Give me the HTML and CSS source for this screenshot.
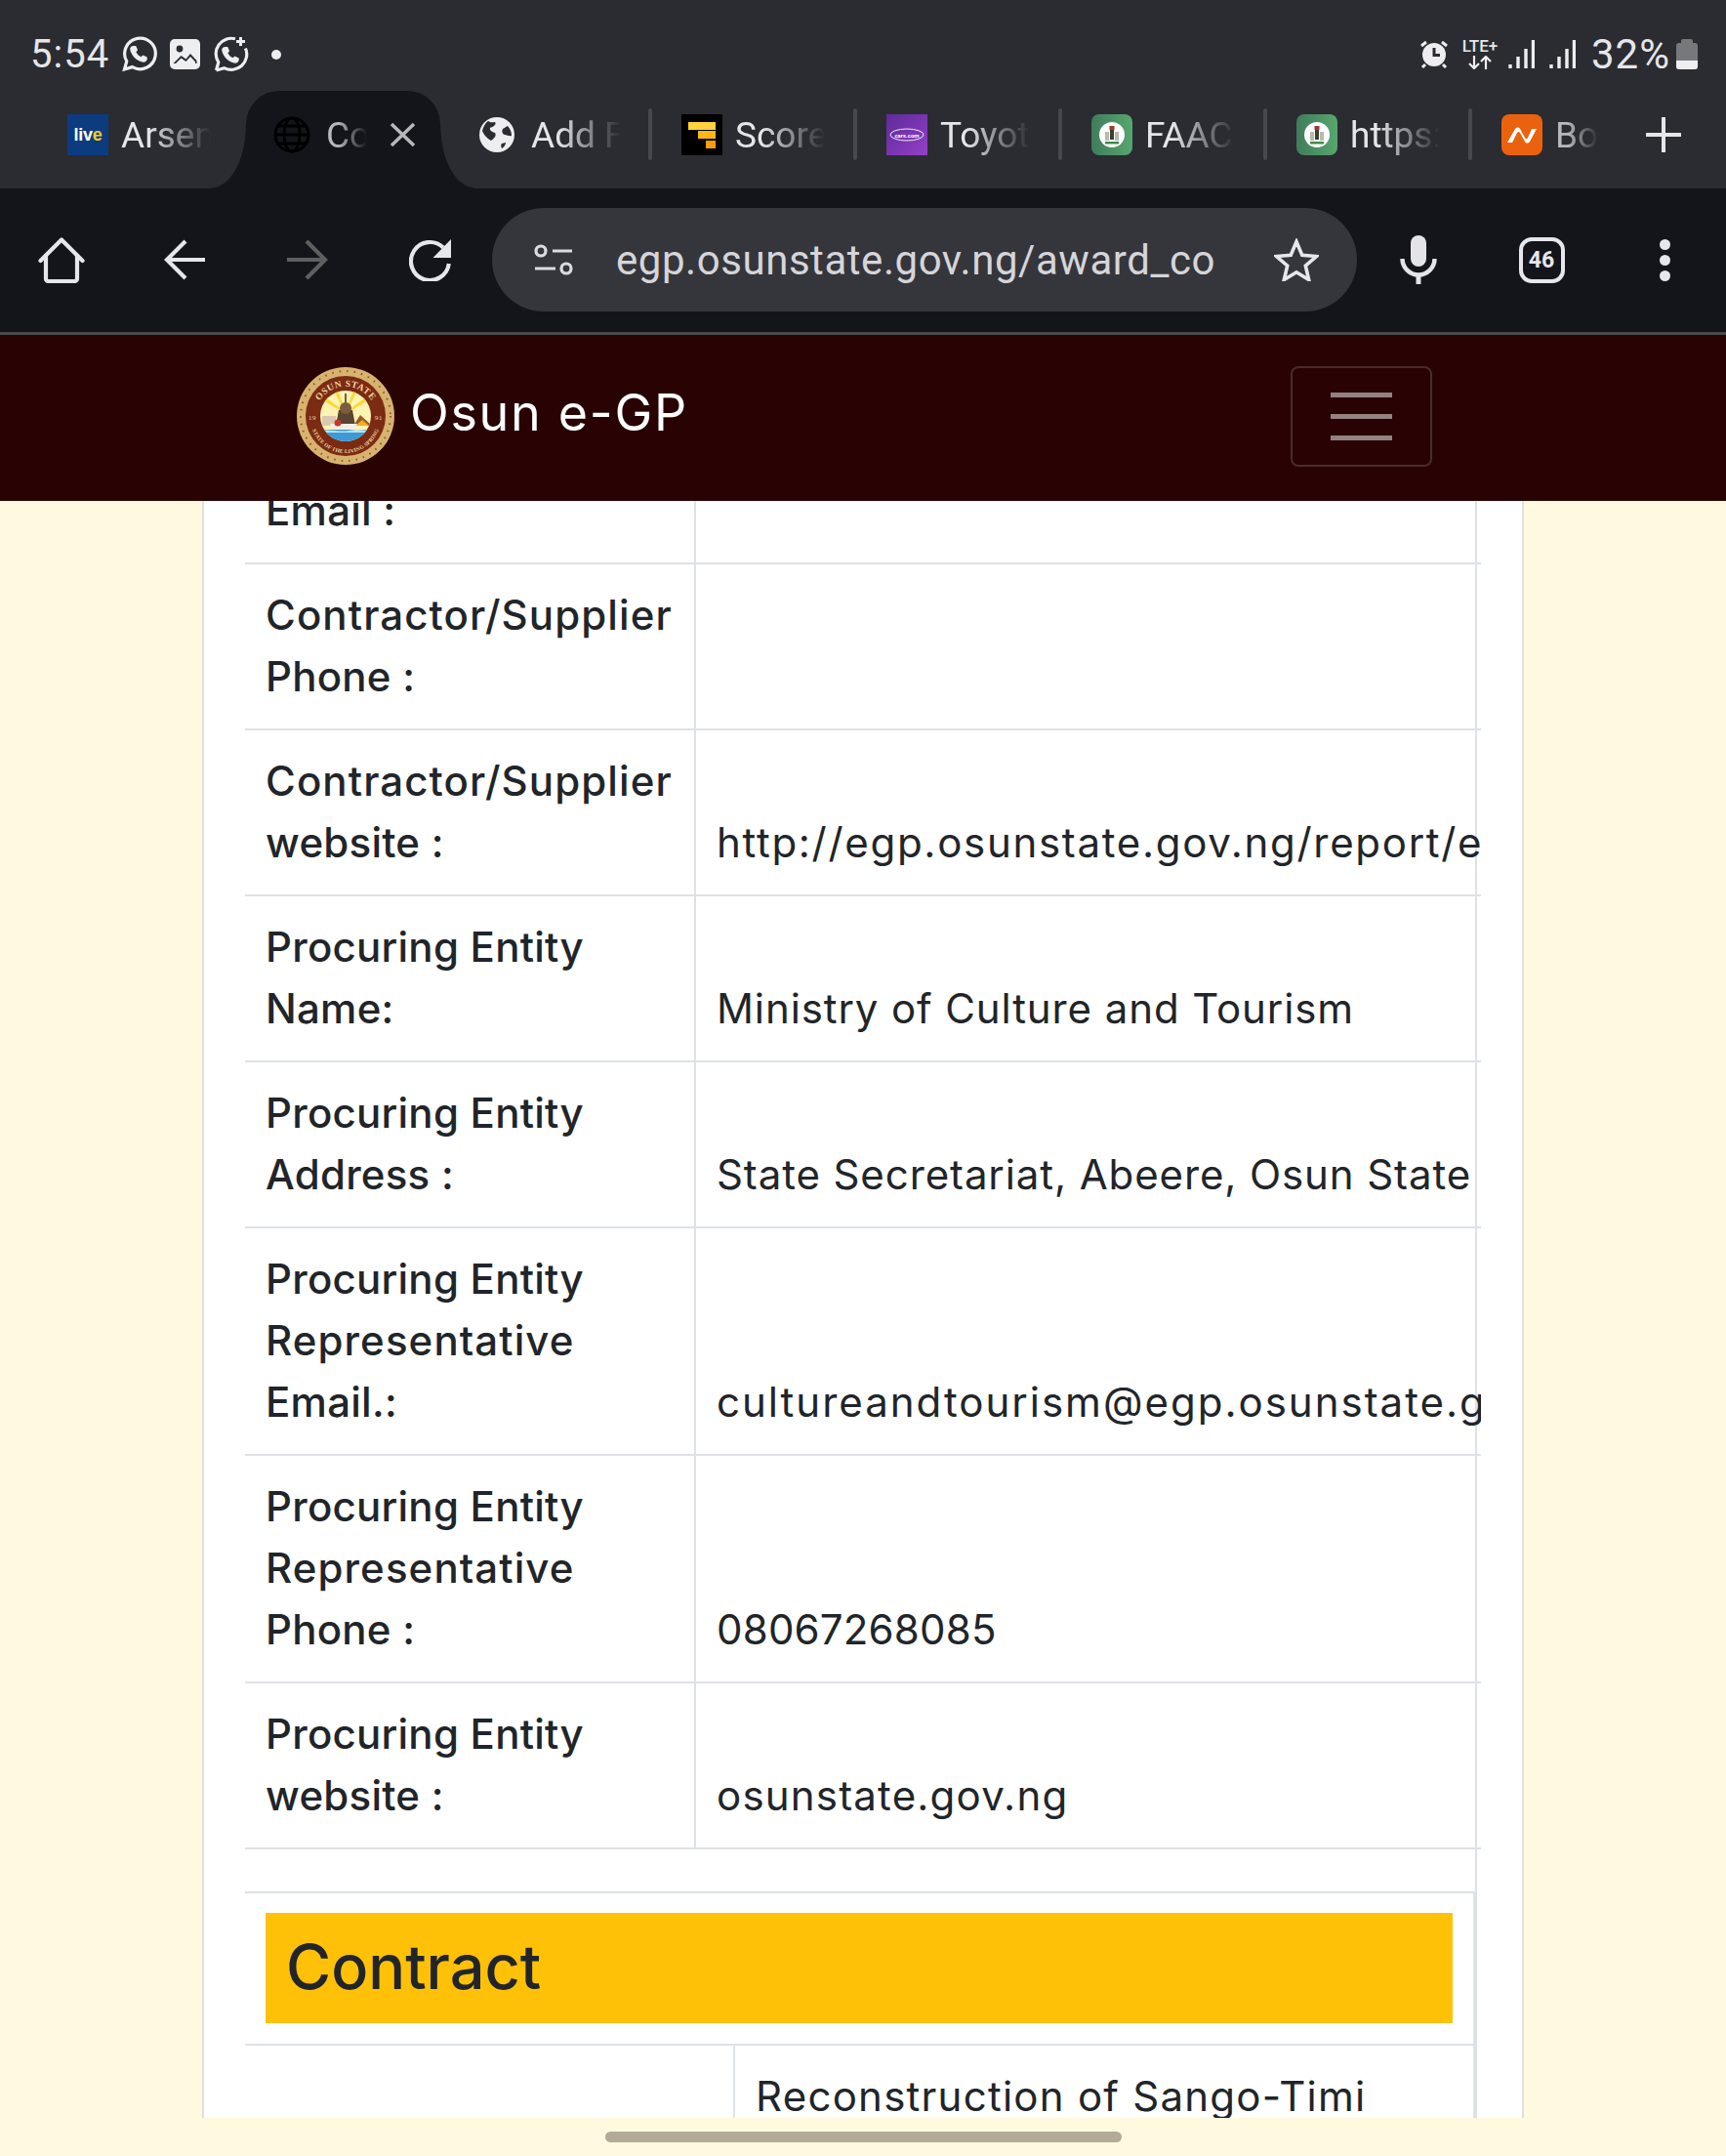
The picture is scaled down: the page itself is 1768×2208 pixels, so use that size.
FILE: index.html
```html
<!DOCTYPE html>
<html lang="en">
<head>
<meta charset="utf-8">
<title>Osun e-GP</title>
<link rel="stylesheet" href="styles.css">
</head>
<body>
<header class="chrome">
  <div class="status">
    <span class="clock">5:54</span>
    <svg class="ic-wa" viewBox="0 0 37 37"><path class="wa-line" d="M3.5 34l2.3-8.2A15.8 15.8 0 1 1 11.6 31.6z"/><path class="wa-fill" d="M13 10l2.2 0 1.9 4.2-1.7 2.1c1.1 2.2 2.8 3.9 5 5l2.1-1.7 4.2 1.9 0 2.2c-.6 2.3-2.8 3.4-5 2.8-6.2-1.6-10.9-6.3-12.4-12.5-.5-2.2.8-4 3.7-4z"/></svg>
    <svg class="ic-img" viewBox="0 0 31 31"><rect class="wa-fill" width="31" height="31" rx="5"/><circle class="dark" cx="10" cy="10" r="3.4"/><path class="dark" d="M3.5 25l8-8 5 3.5 4.5-5.5 6.5 7v3h-24z"/><path class="wa-fill" d="M6 25l5.5-5.500 5 3.500 4.500-5 5 5.300v1.700z"/></svg>
    <svg class="ic-wa2" viewBox="0 0 37 37"><path class="wa-line" d="M3.500 35L5.800 26.800A15.800 15.800 0 0 1 23 2.800M33.500 12.500A15.800 15.800 0 0 1 11.600 32.600L3.500 35"/><path class="wa-fill" d="M13 11l2.200 0 1.900 4.200-1.700 2.100c1.100 2.200 2.800 3.900 5 5l2.100-1.700 4.200 1.900 0 2.200c-.6 2.300-2.800 3.400-5 2.800-6.200-1.600-10.900-6.300-12.400-12.500-.5-2.200.8-4 3.700-4z"/><path class="wa-plus" d="M28.500 1v9M24 5.500h9"/></svg>
    <span class="dot"></span>
    <span class="status-spacer"></span>
    <svg class="ic-alarm" viewBox="0 0 30 29"><circle class="wa-fill" cx="15" cy="15" r="12"/><path class="dark-line" d="M15 8v7.500h6"/><path class="wa-plus" d="M2 6l5-4M28 6l-5-4M6 25l-3 3M24 25l3 3"/></svg>
    <span class="lte"><span class="lte-text">LTE+</span><svg class="lte-arrows" viewBox="0 0 24 14"><path class="thin" d="M6 0v13M1 8l5 5 5-5M18 14V1M13 6l5-5 5 5"/></svg></span>
    <svg class="ic-sig" viewBox="0 0 27 29"><path class="sig" d="M2 25v4M10 17v12M18 9v20M25.500 0v29"/></svg>
    <svg class="ic-sig ic-sig2" viewBox="0 0 27 29"><path class="sig" d="M2 25v4M10 17v12M18 9v20M25.500 0v29"/></svg>
    <span class="pct">32%</span>
    <span class="battery"><span class="bat-cap"></span><span class="bat-body"><span class="bat-level"></span></span></span>
  </div>

  <nav class="tabs">
    <div class="tab tab-first">
      <span class="fav fav-live"><span>liv<b>e</b></span></span>
      <span class="label">Arsen</span>
    </div>
    <div class="tab tab-active">
      <svg class="ic-globe" viewBox="0 0 38 38"><g class="globe-line"><circle cx="19" cy="19" r="17"/><ellipse cx="19" cy="19" rx="8" ry="17"/><path d="M2 19h34"/><path d="M4 10h30M4 28h30"/></g></svg>
      <span class="label label-active">Co</span>
      <svg class="ic-close" viewBox="0 0 27 26"><path d="M2 2l23 22M25 2L2 24"/></svg>
    </div>
    <div class="tab tab-sep tab-third">
      <svg class="ic-world" viewBox="0 0 36 36"><circle class="wa-fill" cx="18" cy="18" r="18"/><path class="dark" d="M9 4c3 2 4 1 7 1 2 3-2 5-5 6-1 3 3 4 5 5 2 3-1 6-4 8C8 22 4 17 3 14 4 10 6 6 9 4zM29 9c3 3 4 7 4 10-2 1-5-1-7-1-3-1-3-4-2-6 2-1 3-2 5-3zM23 27l4-1c0 2-2 5-4 6-1-2-1-4 0-5z"/></svg>
      <span class="label">Add F</span>
      <span class="sep"></span>
    </div>
    <div class="tab tab-sep">
      <span class="fav fav-score"><i class="s1"></i><i class="s2"></i><i class="s3"></i></span>
      <span class="label">Score</span>
      <span class="sep"></span>
    </div>
    <div class="tab tab-sep">
      <span class="fav fav-cars"><svg viewBox="0 0 42 42"><ellipse class="cars-ring" cx="21" cy="21" rx="17" ry="6"/><text class="cars-text" x="21" y="23.500" text-anchor="middle">cars.com</text></svg></span>
      <span class="label">Toyot</span>
      <span class="sep"></span>
    </div>
    <div class="tab tab-sep">
      <span class="fav fav-ng"><svg viewBox="0 0 42 42"><circle cx="21" cy="21" r="13" fill="#fff"/><path d="M18.500 12h5v4h-5z" fill="#a8352b"/><path d="M19 16h4v10h-4z" fill="#37402f"/><path d="M14 18h4v9h-4zM24 18h4v9h-4z" fill="#b9b9ae"/><path d="M14 28h14v2.500H14z" fill="#3f8a4a"/></svg></span>
      <span class="label">FAAC</span>
      <span class="sep"></span>
    </div>
    <div class="tab tab-sep">
      <span class="fav fav-ng"><svg viewBox="0 0 42 42"><circle cx="21" cy="21" r="13" fill="#fff"/><path d="M18.500 12h5v4h-5z" fill="#a8352b"/><path d="M19 16h4v10h-4z" fill="#37402f"/><path d="M14 18h4v9h-4zM24 18h4v9h-4z" fill="#b9b9ae"/><path d="M14 28h14v2.500H14z" fill="#3f8a4a"/></svg></span>
      <span class="label">https:</span>
      <span class="sep"></span>
    </div>
    <div class="tab tab-last">
      <span class="fav fav-nc"><svg viewBox="0 0 42 42"><path d="M6 29l8-14c1.500-2 4-2 5 0l5 9c1 1.500 2 2 3 0l4-9 5 0-7 13c-1.500 2-4 2-5 0l-5-9c-1-1.500-2-1.500-3 0l-5 10z" fill="#fff"/></svg></span>
      <span class="label label-dim">Bo</span>
      <svg class="ic-plus" viewBox="0 0 36 36"><path d="M18 1v34M1 18h34"/></svg>
    </div>
  </nav>

  <div class="toolbar">
    <div class="tool">
      <svg class="ic-home" viewBox="0 0 48 47"><path d="M2.500 24L24 2.500 45.500 24"/><path d="M8 19v23.500a2.500 2.500 0 0 0 2.500 2.500h27a2.500 2.500 0 0 0 2.500-2.500V19"/></svg>
    </div>
    <div class="tool">
      <svg class="ic-arrow" viewBox="0 0 44 44"><path d="M43 22H5M23 3L4 22l19 19"/></svg>
    </div>
    <div class="tool">
      <svg class="ic-arrow ic-forward" viewBox="0 0 44 44"><path d="M1 22h38M21 3l19 19-19 19"/></svg>
    </div>
    <div class="tool">
      <svg class="ic-reload" viewBox="0 0 44 44"><path class="reload-arc" d="M35 9.500A19.500 19.500 0 1 0 40.800 26"/><path class="reload-head" d="M43 1v19H24.500z"/></svg>
    </div>
    <div class="omnibox">
      <svg class="ic-tune" viewBox="0 0 40 32"><circle cx="7" cy="7" r="5"/><path d="M19 7h20M1 25h21"/><circle cx="33" cy="25" r="5"/></svg>
      <span class="url">egp.osunstate.gov.ng/award_contract</span>
      <svg class="ic-star" viewBox="0 0 46 44"><path d="M23 3.500l5.800 13.800 14.700 1.200-11.200 9.600 3.400 14.400L23 34.800 10.300 42.500l3.400-14.400L2.500 18.500l14.700-1.200z"/></svg>
    </div>
    <div class="tool">
      <svg class="ic-mic" viewBox="0 0 38 50"><rect class="mic-fill" x="11" y="0" width="16" height="32" rx="8"/><path class="mic-arc" d="M2.500 24a16.500 16.500 0 0 0 33 0"/><path class="mic-stem" d="M19 40v10"/></svg>
    </div>
    <div class="tool">
      <span class="tabcount">46</span>
    </div>
    <div class="tool">
      <span class="menu"><i></i><i></i><i></i></span>
    </div>
  </div>
</header>

<div class="navbar">
  <div class="brand">
    <svg class="logo" viewBox="0 0 100 100">
      <defs>
        <path id="arcTop" d="M18 52a32 32 0 0 1 64 0"/>
        <path id="arcBot" d="M14 52a36 36 0 0 0 72 0"/>
        <clipPath id="inner"><circle cx="50" cy="50" r="26"/></clipPath>
      </defs>
      <circle cx="50" cy="50" r="50" fill="#d8b26f"/>
      <circle cx="50" cy="50" r="46" fill="none" stroke="#8a5a2a" stroke-width="2" stroke-dasharray="1.500 6"/>
      <circle cx="50" cy="50" r="41" fill="#7b2b12"/>
      <text class="logo-text"><textPath href="#arcTop" startOffset="50%" text-anchor="middle">OSUN STATE</textPath></text>
      <text class="logo-text logo-small"><textPath href="#arcBot" startOffset="50%" text-anchor="middle">STATE OF THE LIVING SPRING</textPath></text>
      <text class="logo-text logo-num" x="16" y="54" text-anchor="middle">19</text>
      <text class="logo-text logo-num" x="84" y="54" text-anchor="middle">91</text>
      <g clip-path="url(#inner)">
        <rect x="24" y="24" width="52" height="52" fill="#fdf3b4"/>
        <path d="M50 48L38 24h4l8 21 8-21h4zM50 48L25 33l2-4 23 17 23-17 2 4z" fill="#fbd93c"/>
        <rect x="26" y="50" width="14" height="10" fill="#d9c9b2"/>
        <path d="M58 60l7-11 12 11z" fill="#9a5a2a"/>
        <path d="M60 60l7-6 7 6z" fill="#f0b020"/>
        <path d="M43 44h14l3 16H40z" fill="#5a4432"/>
        <circle cx="50" cy="42" r="6" fill="#7b5c3f"/>
        <path d="M49 27h2v10h-2z" fill="#7b5c3f"/>
        <path d="M34 58h28l-4 7H38z" fill="#f4efe4"/>
        <circle cx="42" cy="57" r="3.500" fill="#c23a28"/>
        <rect x="24" y="64" width="52" height="12" fill="#3c9ad6"/>
        <path d="M24 65c10-2 20 2 30 0s14 0 22 0v2H24z" fill="#bfe3f2"/>
      </g>
    </svg>
    <span class="brand-name">Osun e-GP</span>
  </div>
  <button class="toggler" type="button" aria-label="Toggle navigation"><i></i><i></i><i></i></button>
</div>

<main class="viewport">
  <section class="card">
    <div class="scroller">
      <table class="details">
        <colgroup><col class="c-head"><col class="c-val"><col class="c-end"></colgroup>
        <tbody>
          <tr><th><span class="wide">Contractor/Supplier</span> Email :</th><td></td><td class="end"></td></tr>
          <tr><th><span class="wide">Contractor/Supplier</span> Phone :</th><td></td><td class="end"></td></tr>
          <tr><th><span class="wide">Contractor/Supplier</span> website :</th><td class="ls-17">http://egp.osunstate.gov.ng/report/egp</td><td class="end"></td></tr>
          <tr><th>Procuring Entity Name:</th><td class="ls-09">Ministry of Culture and Tourism</td><td class="end"></td></tr>
          <tr><th>Procuring Entity Address :</th><td class="ls-09">State Secretariat, Abeere, Osun State</td><td class="end"></td></tr>
          <tr><th>Procuring Entity <span class="wide">Representative</span> Email.:</th><td class="ls-20">cultureandtourism@egp.osunstate.gov.ng</td><td class="end"></td></tr>
          <tr><th>Procuring Entity <span class="wide">Representative</span> Phone :</th><td class="ls-02">08067268085</td><td class="end"></td></tr>
          <tr><th>Procuring Entity website :</th><td class="ls-12">osunstate.gov.ng</td><td class="end"></td></tr>
        </tbody>
      </table>
      <div class="gap"></div>
      <div class="contract">
        <div class="contract-head"><h4 class="contract-title">Contract</h4></div>
        <div class="contract-row">
          <div class="contract-key"></div>
          <div class="contract-val">Reconstruction of Sango-Timi</div>
        </div>
      </div>
    </div>
  </section>
</main>
<div class="scrolltrack"><span class="scrollthumb"></span></div>
</body>
</html>
```

FILE: styles.css
```css
* { box-sizing: border-box; }
html, body { margin: 0; padding: 0; }
body {
  width: 1768px;
  height: 2208px;
  overflow: hidden;
  background: #fff9df;
  font-family: Inter, "Open Sans", sans-serif;
  color: #212529;
}
svg { display: block; flex: none; }

/* browser chrome */
.chrome { background: #2a2c31; font-family: Roboto, sans-serif; color: #e6e6ea; }
.status { height: 93px; display: flex; align-items: center; padding: 18px 29px 0 31px; }
.clock { font-size: 40px; width: 93px; letter-spacing: 1px; }
.ic-wa { width: 37px; height: 37px; }
.ic-img { width: 31px; height: 31px; margin-left: 13px; }
.ic-wa2 { width: 37px; height: 37px; margin-left: 13px; }
.wa-line { fill: none; stroke: #eeeef0; stroke-width: 3.2; }
.wa-fill { fill: #eeeef0; stroke: none; }
.wa-plus { fill: none; stroke: #eeeef0; stroke-width: 3; }
.dark { fill: #2a2c31; stroke: none; }
.dark-line { fill: none; stroke: #2a2c31; stroke-width: 3; }
.dot { width: 10px; height: 10px; border-radius: 50%; background: #eeeef0; margin-left: 23px; }
.status-spacer { flex: 1; }
.ic-alarm { width: 30px; height: 29px; }
.lte { width: 38px; margin-left: 13px; display: flex; flex-direction: column; align-items: center; }
.lte-text { font-size: 17px; font-weight: 500; line-height: 15px; }
.lte-arrows { width: 24px; height: 14px; margin-top: 2px; }
.thin { fill: none; stroke: #eeeef0; stroke-width: 2.2; }
.ic-sig { width: 27px; height: 29px; margin-left: 10px; }
.ic-sig2 { margin-left: 15px; }
.sig { fill: none; stroke: #eeeef0; stroke-width: 3.4; }
.pct { font-size: 42px; width: 82px; margin-left: 16px; white-space: nowrap; letter-spacing: 1px; }
.battery { width: 22px; margin-left: 5px; display: flex; flex-direction: column; align-items: center; }
.bat-cap { width: 12px; height: 4px; background: #77787c; border-radius: 2px 2px 0 0; }
.bat-body { width: 22px; height: 27px; background: #77787c; border-radius: 3px; display: flex; align-items: flex-end; overflow: hidden; }
.bat-level { width: 100%; height: 9px; background: #eeeef0; }

/* tab strip */
.tabs { height: 100px; display: flex; }
.tab { display: flex; align-items: center; height: 100%; padding-left: 30px; padding-bottom: 10px; width: 210px; position: relative; }
.tab-first { width: 252px; padding-left: 69px; }
.tab-active { width: 199px; padding-left: 28px; background: #13151a; border-radius: 34px 34px 0 0; }
.tab-active::before, .tab-active::after { content: ""; position: absolute; bottom: 0; width: 36px; height: 64px; }
.tab-active::before { left: -36px; background: radial-gradient(36px 64px at 0 0, #2a2c31 98%, #13151a 100%); }
.tab-active::after { right: -36px; background: radial-gradient(36px 64px at 100% 0, #2a2c31 98%, #13151a 100%); }
.tab-third { width: 217px; padding-left: 40px; }
.tab-last { width: 260px; }
.fav { width: 42px; height: 42px; flex: none; display: flex; align-items: center; justify-content: center; overflow: hidden; }
.fav svg { width: 42px; height: 42px; }
.fav-live { background: #0d3b80; font-family: "Liberation Sans", sans-serif; font-weight: 700; color: #fff; font-size: 18px; letter-spacing: -.3px; }
.fav-live b { color: #f3cf1f; }
.fav-score { background: #000; flex-direction: column; align-items: flex-end; padding: 7px; gap: 1.500px; }
.fav-score i { display: block; height: 8px; }
.s1 { width: 28px; background: #fed33c; }
.s2 { width: 18px; background: #fdb813; }
.s3 { width: 10px; background: #f89c0e; }
.fav-cars { background: linear-gradient(135deg, #5d2a9a, #9440c8); }
.cars-ring { fill: none; stroke: #eee; stroke-width: 1; }
.cars-text { font: 700 6px Roboto, sans-serif; fill: #fff; }
.fav-ng { background: linear-gradient(90deg, #3f7d5c, #58a66e); border-radius: 8px; }
.fav-nc { background: #ea620e; border-radius: 8px; }
.label {
  font-size: 37px;
  width: 92px;
  margin-left: 13px;
  white-space: nowrap;
  overflow: hidden;
  color: #e6e6ea;
  -webkit-mask-image: linear-gradient(to right, #000 30%, transparent 100%);
  mask-image: linear-gradient(to right, #000 30%, transparent 100%);
}
.label-active { width: 42px; margin-left: 16px; color: #b8b8bc; }
.label-dim { width: 44px; color: #b8b8bc; }
.tab-third .label { margin-left: 17px; }
.ic-globe { width: 38px; height: 38px; }
.globe-line { fill: none; stroke: #000; stroke-width: 3; }
.ic-close { width: 27px; height: 26px; margin-left: 23px; fill: none; stroke: #b8b8bc; stroke-width: 3.500; }
.ic-world { width: 36px; height: 36px; }
.sep { position: absolute; right: 0; top: 18px; width: 4px; height: 53px; background: #46484c; border-radius: 2px; }
.ic-plus { width: 36px; height: 36px; margin-left: 49px; fill: none; stroke: #e6e6ea; stroke-width: 4; stroke-linecap: round; }

/* toolbar */
.toolbar { height: 150px; background: #13151a; border-bottom: 3px solid #4a4a4c; display: flex; align-items: center; padding-bottom: 1px; }
.tool { width: 126px; display: flex; justify-content: center; align-items: center; flex: none; }
.ic-home { width: 48px; height: 47px; fill: none; stroke: #e6e6ec; stroke-width: 4.200; stroke-linecap: round; stroke-linejoin: round; }
.ic-arrow { width: 44px; height: 44px; fill: none; stroke: #e6e6ec; stroke-width: 4.200; }
.ic-forward { stroke: #5f5f62; }
.ic-reload { width: 44px; height: 44px; }
.reload-arc { fill: none; stroke: #e6e6ec; stroke-width: 4.200; }
.reload-head { fill: #e6e6ec; }
.omnibox { width: 886px; height: 106px; border-radius: 53px; background: #35363b; display: flex; align-items: center; padding-left: 43px; flex: none; }
.ic-tune { width: 40px; height: 32px; fill: none; stroke: #dcdce0; stroke-width: 3.200; }
.url { font-size: 42px; letter-spacing: .55px; width: 612px; margin-left: 44px; white-space: nowrap; overflow: hidden; color: #d5d5da; }
.ic-star { width: 46px; height: 44px; margin-left: 62px; fill: none; stroke: #e6e6ec; stroke-width: 3.600; }
.ic-mic { width: 38px; height: 50px; }
.mic-fill { fill: #e3e3e8; }
.mic-arc { fill: none; stroke: #e3e3e8; stroke-width: 4.500; }
.mic-stem { fill: none; stroke: #e3e3e8; stroke-width: 5; }
.tabcount { width: 47px; height: 47px; border: 4px solid #e6e6ec; border-radius: 13px; font-size: 23px; font-weight: 700; display: flex; align-items: center; justify-content: center; color: #e6e6ec; }
.menu { display: flex; flex-direction: column; gap: 5px; }
.menu i { display: block; width: 11px; height: 11px; border-radius: 50%; background: #e6e6ec; }

/* site navbar */
.navbar { height: 170px; background: #290304; display: flex; align-items: center; justify-content: space-between; padding: 0 301px 4px 304px; }
.brand { display: flex; align-items: center; }
.logo { width: 100px; height: 100px; }
.logo-text { font: 700 9.500px "Liberation Serif", serif; fill: #f1d9a8; letter-spacing: .5px; }
.logo-small { font-size: 5.500px; letter-spacing: .2px; }
.logo-num { font-size: 7px; font-weight: 400; }
.brand-name { font-size: 52px; letter-spacing: 1.700px; color: #fff; margin: 0 0 8px 16px; white-space: nowrap; }
.toggler { width: 145px; height: 103px; background: transparent; border: 2px solid #4a2b2c; border-radius: 8px; display: flex; flex-direction: column; align-items: center; justify-content: center; gap: 17px; padding: 0; }
.toggler i { display: block; width: 63px; height: 5px; background: #948180; }

/* page content */
.viewport { height: 1656px; overflow: hidden; }
.card { display: flow-root; margin: 0 207px; height: 100%; background: #fff; border-left: 2px solid #dfdfdf; border-right: 2px solid #dfdfdf; padding-left: 42px; }
.scroller { width: 1266px; overflow: hidden; margin-top: -105px; height: calc(100% + 105px); }
.details { width: 1266px; table-layout: fixed; border-collapse: separate; border-spacing: 0; font-size: 42px; line-height: 63px; }
.c-head { width: 462px; }
.c-val { width: 800px; }
.c-end { width: 4px; }
.details th, .details td { border-bottom: 2px solid #dee2e6; padding: 20px 21px 22px; vertical-align: bottom; text-align: left; }
.details th { font-weight: 500; letter-spacing: .25px; border-right: 2px solid #dee2e6; }
.details td { font-weight: 400; white-space: nowrap; border-right: 2px solid #dee2e6; }
.details td.end { border-right: 0; padding: 0; }
.details .wide { letter-spacing: 1.100px; }
.details .ls-02 { letter-spacing: .2px; }
.details .ls-09 { letter-spacing: .9px; }
.details .ls-12 { letter-spacing: 1.200px; }
.details .ls-17 { letter-spacing: 1.700px; }
.details .ls-20 { letter-spacing: 2px; }
.gap { height: 43px; width: 1262px; border-right: 2px solid #dee2e6; }
.contract { width: 1262px; border-top: 2px solid #dee2e6; border-right: 4px solid #dee2e6; font-size: 42px; line-height: 63px; }
.contract-head { padding: 20px 21px 21px; border-bottom: 2px solid #dee2e6; }
.contract-title { margin: 0; height: 113px; padding-left: 21px; background: #ffc107; font-size: 63px; font-weight: 500; line-height: 111px; color: #212529; }
.contract-row { display: grid; grid-template-columns: 502px 1fr; }
.contract-key { border-right: 2px solid #dee2e6; min-height: 200px; }
.contract-val { padding: 20px 21px 21px; letter-spacing: 1.250px; }

.scrolltrack { height: 39px; padding: 14px 0 0 620px; }
.scrollthumb { display: block; width: 529px; height: 11px; border-radius: 6px; background: #b3aa97; }
```
